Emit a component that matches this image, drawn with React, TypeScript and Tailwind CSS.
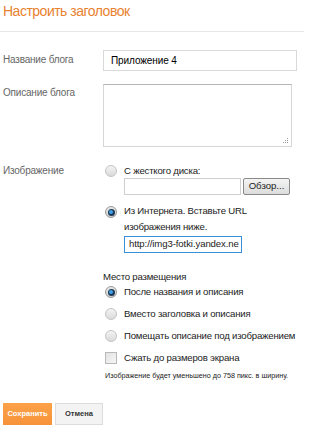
import type { ReactNode } from 'react';

function Radio({ checked }: { checked?: boolean }) {
  if (checked) {
    return (
      <span className="flex h-[12px] w-[12px] shrink-0 items-center justify-center rounded-full border border-[#9a9a9a] bg-gradient-to-b from-[#e8e8e8] to-[#cfcfcf]">
        <span className="flex h-[7px] w-[7px] items-center justify-center rounded-full bg-[#1c3a56]">
          <span className="h-[4px] w-[4px] rounded-full bg-[#3fa0e8]" />
        </span>
      </span>
    );
  }
  return (
    <span className="h-[12px] w-[12px] shrink-0 rounded-full border border-[#c4c4c4] bg-gradient-to-b from-[#f4f4f4] to-[#dadada]" />
  );
}

function Option({ checked, children }: { checked?: boolean; children: ReactNode }) {
  return (
    <div className="flex h-[22px] items-center gap-[7px] whitespace-nowrap pl-[2px] text-[9.6px] tracking-[-0.2px] text-[#222]">
      <Radio checked={checked} />
      <span>{children}</span>
    </div>
  );
}

function Label({ children }: { children: ReactNode }) {
  return (
    <div className="w-[100px] shrink-0 text-[10px] leading-[14px] tracking-[-0.2px] text-[#666]">{children}</div>
  );
}

export default function App() {
  return (
    <div className="h-[430px] w-[304px] overflow-hidden bg-white font-['Liberation_Sans',Arial,sans-serif]">
      <div className="h-[32px] border-b border-[#e6e6e6] pl-[3px] pt-[1px]">
        <h1 className="text-[14px] leading-[20px] tracking-[-0.5px] text-[#e8822f]">Настроить заголовок</h1>
      </div>

      <div className="flex pl-[3px] pt-[18px]">
        <div className="w-[100px] shrink-0 pt-[3px]">
          <Label>Название блога</Label>
        </div>
        <div className="flex h-[21px] w-[194px] items-center border border-[#d9d9d9] pl-[7px] text-[10px] tracking-[-0.1px] text-black">
          Приложение 4
        </div>
      </div>

      <div className="flex pl-[3px] pt-[13px]">
        <div className="w-[100px] shrink-0 pt-[2px]">
          <Label>Описание блога</Label>
        </div>
        <div className="relative h-[63px] w-[189px] border border-[#d6d6d6] border-t-[#b5b5b5]">
          <svg className="absolute bottom-[2px] right-[2px]" width="6" height="6" viewBox="0 0 6 6">
            <rect x="4" y="0" width="1" height="1" fill="#999" />
            <rect x="2" y="2" width="1" height="1" fill="#999" />
            <rect x="4" y="2" width="1" height="1" fill="#999" />
            <rect x="0" y="4" width="1" height="1" fill="#999" />
            <rect x="2" y="4" width="1" height="1" fill="#999" />
            <rect x="4" y="4" width="1" height="1" fill="#999" />
          </svg>
        </div>
      </div>

      <div className="flex pl-[3px] pt-[17px]">
        <div className="w-[100px] shrink-0">
          <Label>Изображение</Label>
        </div>
        <div className="flex flex-col">
          <div className="flex h-[14px] items-center gap-[7px] pl-[2px] text-[9.6px] tracking-[-0.2px] text-[#222]">
            <Radio />
            <span>С жесткого диска:</span>
          </div>
          <div className="flex items-center gap-[2px] pl-[21px]">
            <div className="h-[17px] w-[117px] border border-[#cfcfcf] bg-white" />
            <div className="flex h-[17px] w-[47px] items-center justify-center rounded-[2px] border border-[#8a8a8a] bg-gradient-to-b from-[#f4f4f4] to-[#dcdcdc] text-[9.6px] text-[#222]">
              Обзор...
            </div>
          </div>
          <div className="mt-[8px] flex gap-[7px] whitespace-nowrap pl-[2px] text-[9.6px] leading-[16px] tracking-[-0.2px] text-[#222]">
            <span className="pt-[3px]">
              <Radio checked />
            </span>
            <span>
              Из Интернета. Вставьте URL
              <br />
              изображения ниже.
            </span>
          </div>
          <div className="ml-[21px] mt-[1px] flex h-[17px] w-[118px] items-center overflow-hidden whitespace-nowrap border border-[#3b8fd6] pl-[4px] text-[9.6px] tracking-[-0.1px] text-[#222]">
            http://img3-fotki.yandex.ne
          </div>
        </div>
      </div>

      <div className="pl-[103px] pt-[17px]">
        <div className="h-[14px] text-[9.6px] leading-[14px] tracking-[-0.2px] text-[#222]">Место размещения</div>
        <div className="-mt-[3px]">
          <Option checked>После названия и описания</Option>
          <Option>Вместо заголовка и описания</Option>
          <Option>Помещать описание под изображением</Option>
          <div className="flex h-[22px] items-center gap-[7px] whitespace-nowrap pl-[2px] text-[9.6px] tracking-[-0.2px] text-[#222]">
            <span className="h-[12px] w-[12px] shrink-0 border border-[#b8b8b8] bg-gradient-to-br from-[#e2e2e2] to-[#f6f6f6]" />
            <span>Сжать до размеров экрана</span>
          </div>
        </div>
        <div className="mt-[2px] whitespace-nowrap pl-[2px] text-[7.2px] leading-[10px] text-[#222]">
          Изображение будет уменьшено до 758 пикс. в ширину.
        </div>
      </div>

      <div className="flex gap-[3px] pl-[3px] pt-[22px]">
        <div className="flex h-[22px] w-[49px] items-center justify-center bg-gradient-to-b from-[#fba248] to-[#f7923a] text-[7.5px] font-bold text-white">
          Сохранить
        </div>
        <div className="flex h-[22px] w-[48px] items-center justify-center border border-[#dcdcdc] bg-[#f3f3f3] text-[7.5px] font-bold text-[#333]">
          Отмена
        </div>
      </div>
    </div>
  );
}
